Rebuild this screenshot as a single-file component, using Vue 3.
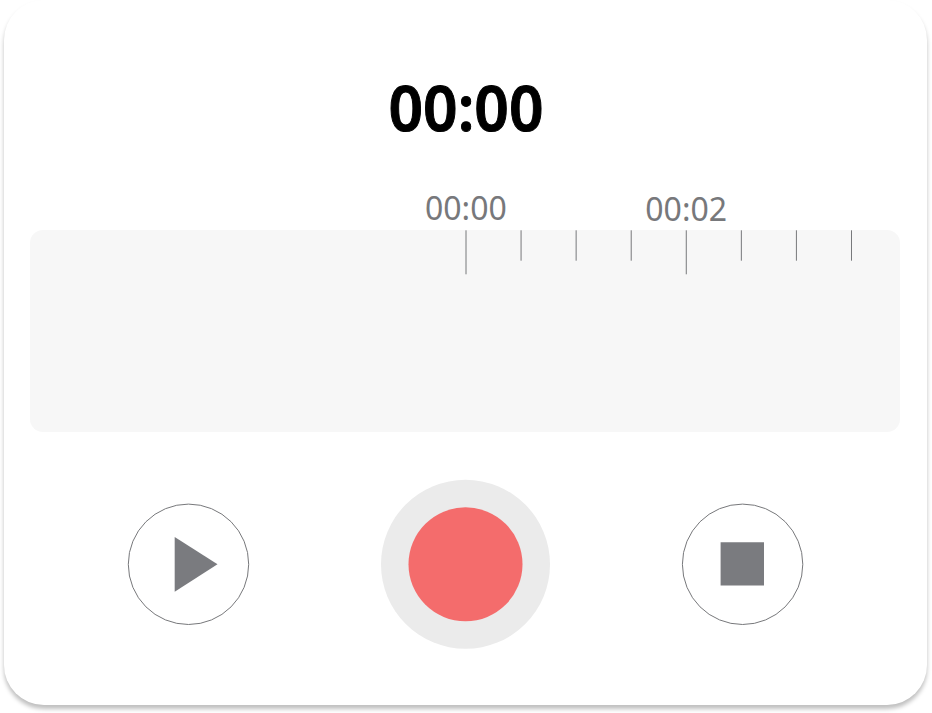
<script setup>
const ticks = Array.from({ length: 8 }, (_, i) => ({ x: 1 + i * 55.07, bottom: i % 4 ? 30.7 : 44.3 }))
</script>

<template>
  <main class="stage">
    <section class="card">
      <h1 class="time">00:00</h1>
      <div class="labels"><span>00:00</span><span class="later">00:02</span></div>
      <div class="wave">
        <svg class="ruler" viewBox="0 0 400 46" width="400" height="46">
          <line v-for="t in ticks" :key="t.x" :x1="t.x" :x2="t.x" y1="0.3" :y2="t.bottom" />
        </svg>
      </div>
      <div class="controls">
        <button class="round" aria-label="Play">
          <svg viewBox="0 0 122 122" width="122" height="122"><circle cx="61.5" cy="61.3" r="60.2" /><path d="M47.7 34 90.5 61.3 47.7 88.7Z" /></svg>
        </button>
        <button class="record" aria-label="Record">
          <svg viewBox="0 0 170 170" width="170" height="170"><circle class="halo" cx="85.5" cy="85.3" r="84.5" /><circle class="dot" cx="85.5" cy="85.3" r="57" /></svg>
        </button>
        <button class="round" aria-label="Stop">
          <svg viewBox="0 0 122 122" width="122" height="122"><circle cx="61.6" cy="61.3" r="60.2" /><path d="M39.6 39.2H83v43.3H39.6Z" /></svg>
        </button>
      </div>
    </section>
  </main>
</template>

<style>
body { background: #fff; overflow: hidden; }
</style>
<style scoped>
.stage { box-sizing: border-box; width: 932px; height: 713px; padding: 0 5px 8px 4px; overflow: hidden; }
.card { box-sizing: border-box; height: 704.6px; padding: 0 27px 0 26px; border-radius: 40px; background: #fff; box-shadow: 0 4px 4px rgba(0, 0, 0, .25); font-family: "Noto Sans", sans-serif; }
.time { margin: 0 0 0 2px; height: 185px; box-sizing: border-box; padding-top: 63px; text-align: center; font-size: 64px; line-height: 88px; font-weight: 600; color: #000; transform: scaleX(.945); -webkit-text-stroke: 1px #000; }
.labels { display: flex; gap: 138.5px; height: 45px; padding-left: 395px; font-size: 32px; line-height: 46px; color: #77787b; }
.later { padding-top: 1px; }
.wave { height: 202px; border-radius: 13px; background: #f7f7f7; }
.ruler { margin-left: 435px; }
.ruler line { stroke: #77787b; stroke-width: 1; }
.controls { display: flex; align-items: center; justify-content: space-between; height: 170px; margin: 47px 97px 0; }
button { display: block; padding: 0; border: 0; background: none; line-height: 0; }
svg { display: block; overflow: visible; }
.round circle { fill: none; stroke: #77787b; stroke-width: 1; }
.round path { fill: #7a7b7f; }
.halo { fill: #ebebeb; }
.dot { fill: #f46c6c; }
</style>
